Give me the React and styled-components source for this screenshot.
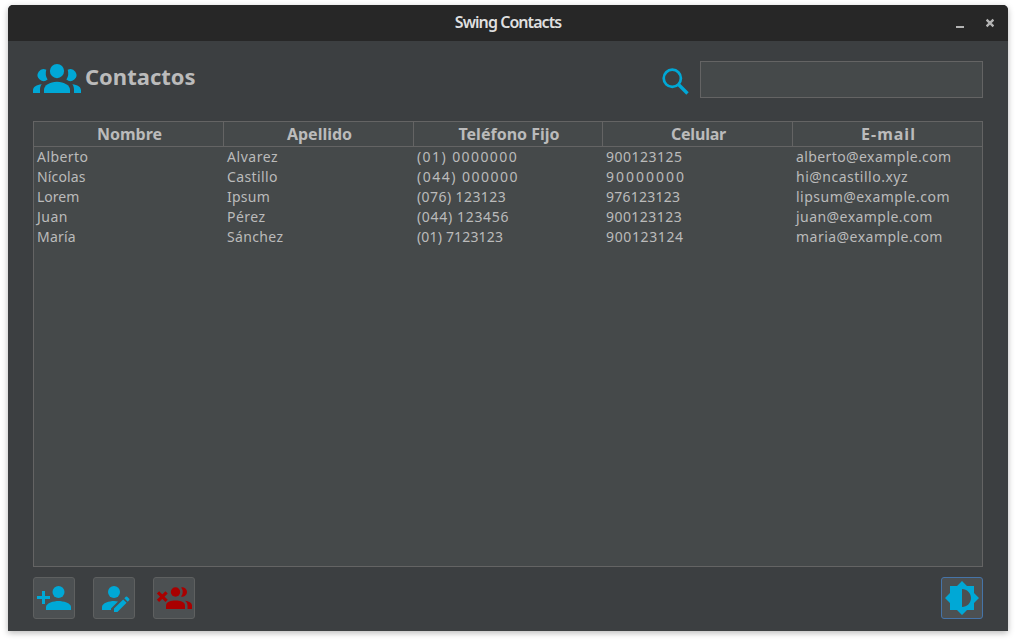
import React from "react";
import styled, { createGlobalStyle } from "styled-components";

const BLUE = "#00a8d6";
const RED = "#a90000";

const GlobalStyle = createGlobalStyle`
  * { box-sizing: border-box; }
  body { margin: 0; background: #fff; overflow: hidden; }
`;

const Page = styled.div`
  height: 642px;
  padding: 5px 8px 11px;
  font-family: "Noto Sans", sans-serif;
  color: #bbbbbb;
`;

const Window = styled.div`
  display: flex;
  flex-direction: column;
  width: 1000px;
  height: 626px;
  border-radius: 5px 5px 0 0;
  overflow: hidden;
  background: #3c3f41;
  box-shadow: 0 2px 6px rgba(0, 0, 0, 0.28);
`;

const TitleBar = styled.div`
  display: grid;
  grid-template-columns: 1fr auto 1fr;
  align-items: center;
  height: 36px;
  flex: none;
  background: #272727;
`;

const WindowTitle = styled.div`
  grid-column: 2;
  padding-bottom: 2px;
  color: #dfdfdf;
  font-size: 16px;
  font-weight: 600;
  letter-spacing: -0.95px;
  white-space: nowrap;
`;

const WindowControls = styled.div`
  display: flex;
  justify-content: flex-end;
  gap: 22px;
  padding-right: 14px;
`;

const Content = styled.div`
  display: flex;
  flex-direction: column;
  flex: 1;
  padding: 20px 25px 12px;
`;

const Header = styled.div`
  display: flex;
  justify-content: space-between;
  height: 37px;
`;

const Heading = styled.div`
  display: flex;
  gap: 4px;
  padding-top: 3px;
`;

const HeadingText = styled.div`
  font-size: 22px;
  line-height: 28px;
  font-weight: 700;
  margin-top: -2px;
`;

const Search = styled.div`
  display: flex;
  gap: 11px;
`;

const SearchInput = styled.input`
  width: 283px;
  height: 37px;
  margin: 0;
  padding: 0 8px;
  border: 1px solid #646464;
  outline: none;
  background: #45494a;
  color: #bbbbbb;
  font: inherit;
`;

const Table = styled.div`
  height: 446px;
  margin-top: 23px;
  border: 1px solid #646464;
  background: #45494a;
`;

const Row = styled.div`
  display: grid;
  grid-template-columns: 190px 190px 189px 190px 189px;
  height: ${(p) => (p.$head ? "25px" : "20px")};
  ${(p) => p.$head && "border-bottom: 1px solid #646464;"}
`;

const HeadCell = styled.div`
  padding-left: 2px;
  border-right: 1px solid #646464;
  text-align: center;
  font-size: 16px;
  font-weight: 700;
  line-height: 24px;
  letter-spacing: ${(p) => p.$spacing}px;
  white-space: nowrap;
  &:last-child { border-right: 0; }
`;

const Cell = styled.div`
  padding-left: 3px;
  font-size: 14px;
  line-height: 20px;
  letter-spacing: ${(p) => p.$spacing}px;
  white-space: nowrap;
`;

const Actions = styled.div`
  display: flex;
  gap: 18px;
  margin-top: 10px;
`;

const ActionButton = styled.button`
  display: flex;
  width: 42px;
  height: 42px;
  padding: 0;
  border: 1px solid ${(p) => (p.$focused ? "#4674a8" : "#5e6060")};
  border-radius: 3px;
  background: #4c5052;
  ${(p) => p.$focused && "margin-left: auto;"}
  svg { display: block; }
`;

const columns = [
  ["Nombre", 0],
  ["Apellido", 0],
  ["Teléfono Fijo", 0],
  ["Celular", -0.2],
  ["E-mail", 1],
];

// Each value is paired with its tracking in pixels.
const contacts = [
  [["Alberto", 0.43], ["Alvarez", 0.55], ["(01) 0000000", 1.42], ["900123125", 0.5], ["alberto@example.com", 0.4]],
  [["Nícolas", 0.14], ["Castillo", 0.4], ["(044) 000000", 1.5], ["90000000", 2], ["hi@ncastillo.xyz", 0.5]],
  [["Lorem", 0], ["Ipsum", 0.25], ["(076) 123123", 0.42], ["976123123", 0.25], ["lipsum@example.com", 0.5]],
  [["Juan", 0.5], ["Pérez", 0.5], ["(044) 123456", 0.67], ["900123123", 0.45], ["juan@example.com", 0.45]],
  [["María", 0.2], ["Sánchez", 0.35], ["(01) 7123123", 0.17], ["900123124", 0.62], ["maria@example.com", 0.47]],
];

const GroupIcon = () => (
  <svg width="48" height="30" viewBox="0 0 48 30" fill={BLUE}>
    <circle cx="24" cy="7.1" r="7.1" />
    <path d="M11 29v-3c0-4.700 5.800-8.300 13-8.300s13 3.600 13 8.300v3z" />
    <path d="M13.300 5.700A6 6 0 1 0 14.600 15.600A12 12 0 0 1 13.300 5.700z" />
    <path d="M34.700 5.700A6 6 0 1 1 33.400 15.600A12 12 0 0 0 34.700 5.700z" />
    <path d="M0 29v-2.500C0 23 3.500 20.700 8.700 20.300C7.300 22 7 24 7 26v3z" />
    <path d="M48 29v-2.500C48 23 44.500 20.700 39.300 20.300C40.700 22 41 24 41 26v3z" />
  </svg>
);

const SearchIcon = () => (
  <svg width="27" height="37" viewBox="0 0 27 37" fill="none" stroke={BLUE} strokeWidth="2.700">
    <circle cx="10.300" cy="17.300" r="8.600" />
    <path d="M16.500 23.500L25.500 32.500" strokeWidth="3.400" />
  </svg>
);

const AddIcon = () => (
  <svg width="40" height="40" viewBox="0 0 40 40" fill={BLUE}>
    <circle cx="24.500" cy="14" r="6" />
    <path d="M12 32v-3c0-4 8-6 12.500-6s12.500 2 12.500 6v3z" />
    <path d="M8 13h3v5h5v3h-5v5H8v-5H3v-3h5z" />
  </svg>
);

const EditIcon = () => (
  <svg width="40" height="40" viewBox="0 0 40 40" fill={BLUE}>
    <circle cx="20" cy="14" r="6" />
    <path d="M8 32v-3c0-4 7.500-6 12-6c1.300 0 2.600.2 4 .5L17 30.500V32z" />
    <path d="M20 34v-3.400L29.200 21.400l3.400 3.400L23.400 34z M30.300 20.300l1.500-1.500q.7-.6 1.400 0l2 2q.6.700 0 1.400l-1.500 1.500z" />
  </svg>
);

const RemoveIcon = () => (
  <svg width="40" height="40" viewBox="0 0 40 40" fill={RED}>
    <path d="M4 14.300l8.600 8.600M12.600 14.300l-8.600 8.600" stroke={RED} strokeWidth="3.200" />
    <circle cx="21.500" cy="14" r="4.700" />
    <path d="M12 31v-3.500c0-4 5.500-5 9.500-5s9.500 1 9.500 5V31z" />
    <path d="M27 9.500a4.700 4.700 0 1 1 0 9c2.300-2.500 2.300-6.500 0-9z" />
    <path d="M31 22.700c3.500.4 7 1.800 7 4.800V31h-4.500v-3.500c0-2-.9-3.600-2.500-4.800z" />
  </svg>
);

const BrightnessIcon = () => (
  <svg width="40" height="40" viewBox="0 0 40 40" fill={BLUE}>
    <path d="M32 15V8h-7l-5-5-5 5H8v7l-5 5 5 5v7h7l5 5 5-5h7v-7l5-5zM20 29V11c5 0 9 4 9 9s-4 9-9 9z" />
  </svg>
);

const MinimizeIcon = () => (
  <svg width="8" height="10" viewBox="0 0 8 10">
    <path d="M0 9h8" stroke="#b4b4b4" strokeWidth="2" />
  </svg>
);

const CloseIcon = () => (
  <svg width="8" height="10" viewBox="0 0 8 10">
    <path d="M.6 1.600L7.400 8.400M7.400 1.600L.6 8.400" stroke="#b4b4b4" strokeWidth="2.300" />
  </svg>
);

export default function App() {
  return (
    <Page>
      <GlobalStyle />
      <Window>
        <TitleBar>
          <WindowTitle>Swing Contacts</WindowTitle>
          <WindowControls>
            <MinimizeIcon />
            <CloseIcon />
          </WindowControls>
        </TitleBar>
        <Content>
          <Header>
            <Heading>
              <GroupIcon />
              <HeadingText>Contactos</HeadingText>
            </Heading>
            <Search>
              <SearchIcon />
              <SearchInput aria-label="Buscar" />
            </Search>
          </Header>
          <Table>
            <Row $head>
              {columns.map(([label, spacing]) => (
                <HeadCell key={label} $spacing={spacing}>{label}</HeadCell>
              ))}
            </Row>
            {contacts.map((row) => (
              <Row key={row[4][0]}>
                {row.map(([value, spacing]) => (
                  <Cell key={value} $spacing={spacing}>{value}</Cell>
                ))}
              </Row>
            ))}
          </Table>
          <Actions>
            <ActionButton aria-label="Agregar"><AddIcon /></ActionButton>
            <ActionButton aria-label="Editar"><EditIcon /></ActionButton>
            <ActionButton aria-label="Eliminar"><RemoveIcon /></ActionButton>
            <ActionButton aria-label="Tema" $focused><BrightnessIcon /></ActionButton>
          </Actions>
        </Content>
      </Window>
    </Page>
  );
}
